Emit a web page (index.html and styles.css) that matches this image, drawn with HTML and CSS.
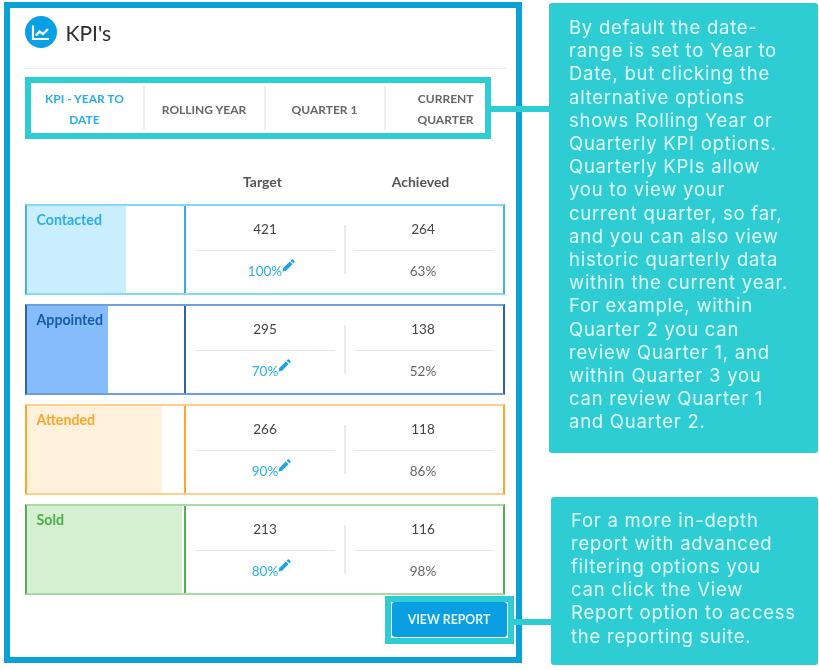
FILE: index.html
```html
<!DOCTYPE html>
<html lang="en">
<head>
<meta charset="utf-8">
<title>KPI's</title>
<link rel="stylesheet" href="styles.css">
</head>
<body>
<div class="page">
  <main class="panel">
    <header class="panel-head">
      <span class="badge">
        <svg viewBox="0 0 32 32" width="32" height="32" aria-hidden="true"><path d="M8 9.500v13.500h16" fill="none" stroke="#fff" stroke-width="2.200"/><path d="M11 19.500l3.500-4 3.500 2.500 5-5" fill="none" stroke="#fff" stroke-width="2.200"/></svg>
      </span>
      <h1 class="title">KPI's</h1>
    </header>
    <nav class="tabs">
      <div class="tab tab-active">KPI - YEAR TO DATE</div>
      <div class="tab">ROLLING YEAR</div>
      <div class="tab">QUARTER 1</div>
      <div class="tab tab-last">CURRENT QUARTER</div>
    </nav>
    <div class="col-heads">
      <span>Target</span>
      <span>Achieved</span>
    </div>
    <section class="rows">
      <article class="row contacted">
        <div class="name"><div class="fill" style="width:99px"></div><span class="label">Contacted</span></div>
        <div class="metrics">
          <div class="metric"><div class="val">421</div><div class="pct target"><span class="pct-num">100%<svg class="pencil" viewBox="0 0 12 12" width="13" height="13" aria-hidden="true"><path d="M0.500 11.500l0.700-3.200 6-6 2.500 2.500-6 6zM8 1.500l1-1q0.600-0.500 1.200 0l1.300 1.300q0.500 0.600 0 1.200l-1 1z"/></svg></span></div></div>
          <div class="metric"><div class="val">264</div><div class="pct">63%</div></div>
        </div>
      </article>
      <article class="row appointed">
        <div class="name"><div class="fill" style="width:81px"></div><span class="label">Appointed</span></div>
        <div class="metrics">
          <div class="metric"><div class="val">295</div><div class="pct target"><span class="pct-num">70%<svg class="pencil" viewBox="0 0 12 12" width="13" height="13" aria-hidden="true"><path d="M0.500 11.500l0.700-3.200 6-6 2.500 2.500-6 6zM8 1.500l1-1q0.600-0.500 1.200 0l1.300 1.300q0.500 0.600 0 1.200l-1 1z"/></svg></span></div></div>
          <div class="metric"><div class="val">138</div><div class="pct">52%</div></div>
        </div>
      </article>
      <article class="row attended">
        <div class="name"><div class="fill" style="width:135px"></div><span class="label">Attended</span></div>
        <div class="metrics">
          <div class="metric"><div class="val">266</div><div class="pct target"><span class="pct-num">90%<svg class="pencil" viewBox="0 0 12 12" width="13" height="13" aria-hidden="true"><path d="M0.500 11.500l0.700-3.200 6-6 2.500 2.500-6 6zM8 1.500l1-1q0.600-0.500 1.200 0l1.300 1.300q0.500 0.600 0 1.200l-1 1z"/></svg></span></div></div>
          <div class="metric"><div class="val">118</div><div class="pct">86%</div></div>
        </div>
      </article>
      <article class="row sold">
        <div class="name"><div class="fill" style="width:155px"></div><span class="label">Sold</span></div>
        <div class="metrics">
          <div class="metric"><div class="val">213</div><div class="pct target"><span class="pct-num">80%<svg class="pencil" viewBox="0 0 12 12" width="13" height="13" aria-hidden="true"><path d="M0.500 11.500l0.700-3.200 6-6 2.500 2.500-6 6zM8 1.500l1-1q0.600-0.500 1.200 0l1.300 1.300q0.500 0.600 0 1.200l-1 1z"/></svg></span></div></div>
          <div class="metric"><div class="val">116</div><div class="pct">98%</div></div>
        </div>
      </article>
    </section>
    <div class="actions">
      <div class="report-outline"><button class="report-btn" type="button">VIEW REPORT</button></div>
    </div>
  </main>
  <aside class="notes">
    <p class="note note-top">By default the date-<br>range is set to Year to<br>Date, but clicking the<br>alternative options<br>shows Rolling Year or<br>Quarterly KPI options.<br>Quarterly KPIs allow<br>you to view your<br>current quarter, so far,<br>and you can also view<br>historic quarterly data<br>within the current year.<br>For example, within<br>Quarter 2 you can<br>review Quarter 1, and<br>within Quarter 3 you<br>can review Quarter 1<br>and Quarter 2.</p>
    <p class="note note-bottom">For a more in-depth<br>report with advanced<br>filtering options you<br>can click the View<br>Report option to access<br>the reporting suite.</p>
  </aside>
  <div class="link link-tabs"></div>
  <div class="link link-report"></div>
</div>
</body>
</html>
```
FILE: styles.css
```css
* { box-sizing: border-box; }
html, body { margin: 0; padding: 0; background: #fff; }
body { font-family: Lato, "Open Sans", sans-serif; color: #444; }
.page { position: relative; width: 819px; height: 670px; display: flex; align-items: flex-start; padding: 2px 2px 0 4px; overflow: hidden; filter: blur(0.35px); }

.panel { width: 518px; height: 661px; border: 6.500px solid #08a2d6; padding: 0 10px 0 14.500px; flex: none; }
.panel-head { height: 60.500px; border-bottom: 1px solid #ececec; display: flex; align-items: center; gap: 9px; padding-bottom: 11px; }
.badge { width: 32px; height: 32px; border-radius: 50%; background: #08a0e4; display: block; flex: none; }
.badge svg { display: block; }
.title { margin: 0; font-size: 21px; font-weight: 400; color: #2e2e2e; }

.tabs { width: 466px; height: 62px; margin-top: 8px; border: 6px solid #2dcdd3; display: flex; align-items: center; }
.tab { height: 44px; flex: none; width: 114px; display: flex; align-items: center; justify-content: center; text-align: center; font-size: 12px; font-weight: 700; line-height: 21px; color: #666; border-right: 2px solid #eeeeee; padding: 3px 10px 0; }
.tab:nth-child(2) { width: 121px; }
.tab:nth-child(3) { width: 120px; }
.tab-active { color: #2aaeea; padding-right: 14px; }
.tab-last { width: 99px; border-right: 0; padding: 3px 11px 0 25px; text-align: right; justify-content: flex-end; }

.col-heads { display: grid; grid-template-columns: 158px 158px; margin: 35px 0 0 159px; height: 30px; font-size: 14px; font-weight: 700; color: #555; line-height: 16px; text-align: center; }

.rows { display: flex; flex-direction: column; gap: 9px; }
.row { width: 480px; height: 91px; display: grid; grid-template-columns: 159px 1fr; border-style: solid; border-width: 2px 2px; }
.name { position: relative; border-right: 2px solid; }
.fill { height: 100%; }
.label { position: absolute; left: 10px; top: 6px; font-size: 14.200px; font-weight: 700; line-height: 16px; }
.metrics { display: grid; grid-template-columns: 139px 139px; column-gap: 19px; padding: 0 0 0 10px; position: relative; }
.metrics::after { content: ""; position: absolute; left: 158.500px; top: 19px; bottom: 19px; width: 2px; background: #e9e9e9; }
.metric { display: flex; flex-direction: column; }
.val { height: 45px; border-bottom: 1px solid #e6e6e6; display: flex; align-items: center; justify-content: center; padding-top: 2px; font-size: 13.500px; color: #444; }
.pct { height: 42px; display: flex; align-items: center; justify-content: center; padding-bottom: 1px; font-size: 13.500px; color: #666; }
.target { color: #2aaeea; }
.pct-num { display: block; position: relative; }
.pencil { display: block; position: absolute; left: 100%; top: -4px; fill: #1ea3e4; }

.contacted { border-color: #86d8fb #3fb4ee; }
.contacted .name { border-right-color: #35ade9; }
.contacted .fill { background: #c9efff; }
.contacted .label { color: #2aaeea; }
.appointed { border-color: #6f9fd8 #2f62a8; }
.appointed .name { border-right-color: #2f62a8; }
.appointed .fill { background: #85bdfc; }
.appointed .label { color: #1c5aa8; }
.attended { border-color: #fdd08c #fba62c; }
.attended .name { border-right-color: #fba62c; }
.attended .fill { background: #fff1dc; }
.attended .label { color: #fba62c; }
.sold { border-color: #a8dba5 #55ae50; }
.sold .name { border-right-color: #55ae50; }
.sold .fill { background: #d4f0d0; }
.sold .label { color: #4dab48; }

.actions { display: flex; justify-content: flex-end; margin: 1px -7.500px 0 0; }
.report-outline { width: 129px; height: 48px; border: 6.500px solid #2dcdd3; background: #fff; padding: 0.500px 1px; }
.report-btn { width: 100%; height: 100%; border: 0; border-radius: 3px; background: #0a9fe3; color: #e4f6ff; font: 700 12.300px Lato, sans-serif; padding: 0; }

.notes { margin-left: 27px; width: 269px; flex: none; display: flex; flex-direction: column; gap: 44px; }
.note { margin: 0; background: #2dcdd3; border-radius: 3px; color: #e2fbfb; font-family: Inter, "Open Sans", sans-serif; font-size: 18.500px; line-height: 23.200px; letter-spacing: 0.750px; }
.note-top { height: 450px; padding: 13px 0 0 20px; margin-top: 1px; }
.note-bottom { height: 168px; padding: 11.500px 0 0 20px; margin-left: 2px; }

.link { position: absolute; height: 6px; background: #2dcdd3; }
.link-tabs { left: 491px; top: 106px; width: 58px; }
.link-report { left: 514px; top: 619px; width: 37px; }
```
